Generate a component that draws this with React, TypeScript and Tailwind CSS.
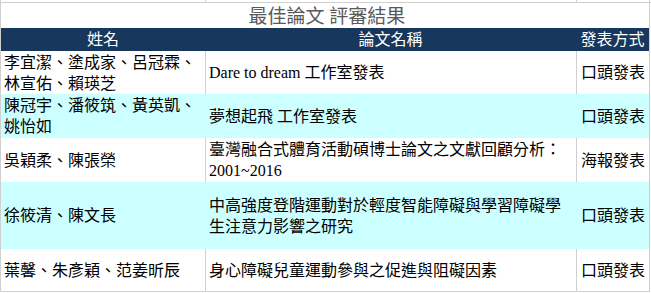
import React from 'react';

type Row = {
  names: string[];
  title: string[];
  kind: string;
  height: string;
  cyan: boolean;
};

const rows: Row[] = [
  {
    names: ['李宜潔、塗成家、呂冠霖、', '林宣佑、賴瑛芝'],
    title: ['Dare to dream 工作室發表'],
    kind: '口頭發表',
    height: 'h-[43px]',
    cyan: false,
  },
  {
    names: ['陳冠宇、潘筱筑、黃英凱、', '姚怡如'],
    title: ['夢想起飛 工作室發表'],
    kind: '口頭發表',
    height: 'h-[44px]',
    cyan: true,
  },
  {
    names: ['吳穎柔、陳張榮'],
    title: ['臺灣融合式體育活動碩博士論文之文獻回顧分析：', '2001~2016'],
    kind: '海報發表',
    height: 'h-[44px]',
    cyan: false,
  },
  {
    names: ['徐筱清、陳文長'],
    title: ['中高強度登階運動對於輕度智能障礙與學習障礙學', '生注意力影響之研究'],
    kind: '口頭發表',
    height: 'h-[67px]',
    cyan: true,
  },
  {
    names: ['葉馨、朱彥穎、范姜昕辰'],
    title: ['身心障礙兒童運動參與之促進與阻礙因素'],
    kind: '口頭發表',
    height: 'h-[43px]',
    cyan: false,
  },
];

const font = { fontFamily: "'Liberation Serif', 'Noto Sans CJK TC', serif" };

const App: React.FC = () => {
  return (
    <div className="w-[651px] h-[293px] bg-white overflow-hidden text-black" style={font}>
      {/* sliver of the row above */}
      <div className="flex h-[3px] border-b border-[#d0d0d0]">
        <div className="w-[205px] border-l border-[#d0d0d0]" />
        <div className="w-[371px] border-l border-[#d0d0d0]" />
        <div className="w-[74px] border-l border-r border-[#d0d0d0]" />
      </div>

      {/* title */}
      <div className="flex h-[25px] w-[650px] border-l border-r border-[#d0d0d0] items-end justify-center">
        <span className="text-[19px] leading-[22px] text-[#595959] pl-[4px]">最佳論文 評審結果</span>
      </div>

      {/* header */}
      <div className="flex h-[23px] w-[650px] bg-[#17375d] text-white text-[16px] leading-[20px] border-l border-r border-[#d0d0d0]">
        <div className="w-[204px] flex items-center justify-center">姓名</div>
        <div className="w-[371px] flex items-center justify-center">論文名稱</div>
        <div className="w-[73px] flex items-center justify-center">發表方式</div>
      </div>

      {rows.map((row, i) => {
        const line = row.cyan ? 'border-[#ccffff]' : 'border-[#d0d0d0]';
        return (
          <div
            key={i}
            className={`flex ${row.height} w-[650px] text-[16px] leading-[21px] border-l border-r border-[#d0d0d0] ${
              row.cyan ? 'bg-[#ccffff]' : 'bg-white'
            } ${i === rows.length - 1 ? 'border-b' : ''}`}
          >
            <div className="w-[204px] flex flex-col justify-center pl-[3px]">
              {row.names.map((n, j) => (
                <div key={j} className="whitespace-nowrap">{n}</div>
              ))}
            </div>
            <div className={`w-[371px] flex flex-col justify-center pl-[3px] border-l ${line}`}>
              {row.title.map((t, j) => (
                <div key={j} className="whitespace-nowrap">{t}</div>
              ))}
            </div>
            <div className={`w-[73px] flex items-center justify-center border-l ${line}`}>
              {row.kind}
            </div>
          </div>
        );
      })}
    </div>
  );
};

export default App;
